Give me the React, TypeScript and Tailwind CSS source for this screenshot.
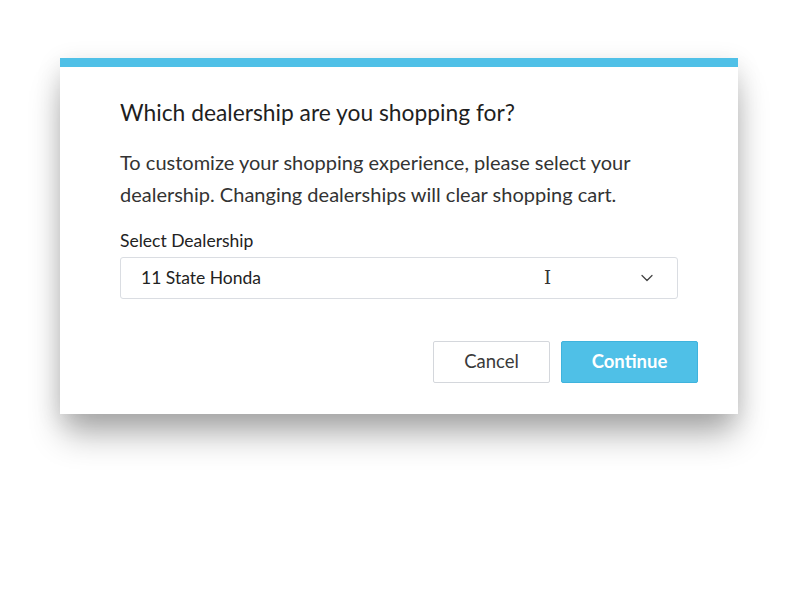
import { ChevronDown } from "lucide-react";

export default function App() {
  return (
    <div className="min-h-[609px] w-full bg-white pt-[58px] font-['Lato','Noto_Sans',sans-serif]">
      <div className="ml-[60px] w-[678px] bg-white shadow-[0_24px_32px_-4px_rgba(0,0,0,0.3),0_6px_24px_rgba(0,0,0,0.12)]">
        <div className="h-[9px] bg-[#4fc0e7]" />
        <div className="pl-[60px] pr-[40px] pb-[31px] pt-[30px]">
          <h2 className="text-[22.8px] leading-[31px] text-[#1f1f1f]">Which dealership are you shopping for?</h2>
          <p className="mt-[18px] pr-[20px] text-[20px] leading-[32px] text-[#333]">
            To customize your shopping experience, please select your dealership. Changing dealerships will clear
            shopping cart.
          </p>
          <div className="mt-[19px] text-[17.5px] leading-[24px] text-[#222]">Select Dealership</div>
          <div className="relative mt-[4px] mr-[20px] flex h-[42px] items-center justify-between rounded-[3px] border border-[#dadde2] pl-[20px] pr-[20px]">
            <span className="text-[17.5px] text-[#222]">11 State Honda</span>
            <ChevronDown className="h-[20px] w-[20px] text-[#444]" strokeWidth={1.5} />
            <span className="absolute left-[423px] top-[9px] text-[18px] leading-[22px] text-[#333] font-['DejaVu_Serif',serif]">
              I
            </span>
          </div>
          <div className="mt-[42px] flex justify-end gap-[11px]">
            <button className="h-[42px] w-[117px] rounded-[2px] border border-[#d4d7dc] bg-white text-[18.5px] text-[#3a3a3a]">
              Cancel
            </button>
            <button className="h-[42px] w-[137px] rounded-[2px] border border-[#3fb3dd] bg-[#4fc0e7] text-[18.5px] font-bold text-white">
              Continue
            </button>
          </div>
        </div>
      </div>
    </div>
  );
}
